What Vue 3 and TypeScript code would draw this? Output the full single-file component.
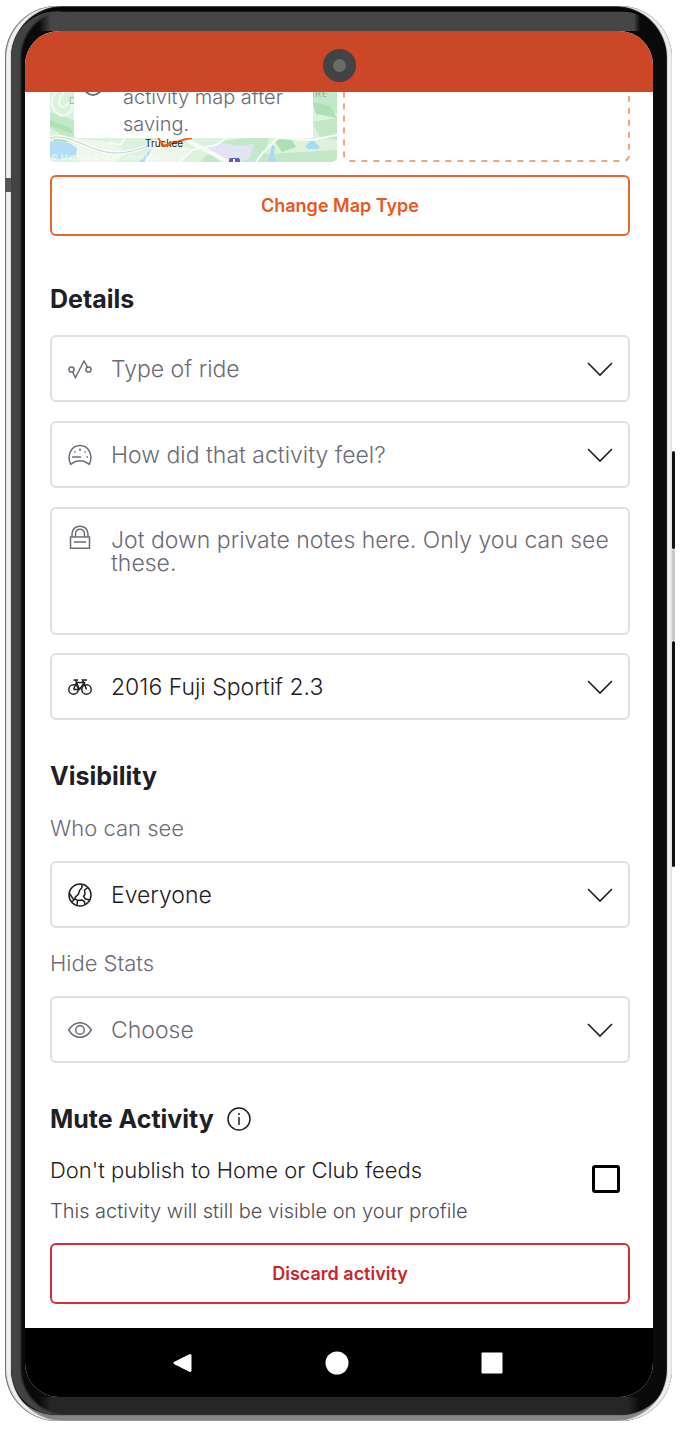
<script setup lang="ts">
import { ref } from 'vue'

const rideType = ref('')
const feel = ref('')
const notes = ref('')
const gear = ref('fuji')
const audience = ref('everyone')
const hiddenStats = ref('')
const muted = ref(false)
</script>

<template>
  <div class="stage">
    <div class="device">
      <span class="side-key left"></span>
      <span class="side-key power"></span>
      <span class="side-key volume"></span>
      <span class="side-key mid"></span>
      <div class="bezel">
        <div class="screen">
          <header class="status-bar">
            <span class="camera"></span>
          </header>

          <main class="content">
            <section class="media">
              <div class="map">
                <svg class="map-art" viewBox="0 0 287 70" preserveAspectRatio="xMidYMax slice" aria-hidden="true">
                  <rect width="287" height="70" fill="#dcf2dd" />
                  <path d="M0 20L24 28V50L0 36ZM170 50L220 42L215 62L287 58V70H150ZM245 0H287V22L262 12ZM262 30L287 26V48L270 45Z" fill="#c3e8c7" />
                  <path d="M20 46L60 50L75 60L66 70H30L24 58ZM100 52L122 48L140 57L130 70H98Z" fill="#edf7ea" />
                  <path d="M262 10L280 14L287 26L266 22ZM0 28L20 36L24 42L0 34ZM224 48L240 45L246 55L232 60ZM2 46L12 44L18 50L4 49Z" fill="#afdfb5" />
                  <path d="M156 54C170 48 178 53 190 54L204 52L200 66L190 70H170Z" fill="#e2e3f3" />
                  <path d="M0 50C10 48 20 51 27 56L26 64L8 67L0 65Z" fill="#b4dcf5" />
                  <path d="M255 55L262 47L270 55L268 57H258ZM222 53L225 55L224 62L226 70H218L220 62ZM89 70L98 60L102 57L94 70Z" fill="#acd8f5" />
                  <path d="M6 0C-1 8 2 20 10 23C16 25 24 20 22 12M14 0C7 8 8 16 14 15L20 10" fill="none" stroke="#f3faf2" stroke-width="2" />
                  <path d="M0 46C16 42 30 52 48 58C66 64 84 60 100 53C115 47 126 44 136 48L156 58L178 70" fill="none" stroke="#f8fbf8" stroke-width="4" />
                  <path d="M0 46C16 42 30 52 48 58C66 64 84 60 100 53" fill="none" stroke="#c9cfd8" stroke-width="1" />
                  <path d="M60 50L70 53L75 46M96 70C101 60 106 56 118 52M130 70L142 58L166 53L178 45M206 70C214 58 220 54 228 46L262 48L287 43" fill="none" stroke="#f8fbf8" stroke-width="2" />
                  <path d="M108 46L114 54L136 47L142 46" fill="none" stroke="#fc5a1f" stroke-width="2" />
                  <rect x="179" y="66" width="11" height="8" rx="2" fill="#5f5db8" />
                  <path d="M184 67V70" stroke="#fff" stroke-width="2" />
                  <text class="map-region" x="19" y="12">D</text>
                  <text class="map-region" x="262" y="5">IRE</text>
                  <text class="map-credit" x="1" y="68">© Mapbox © OpenStreetMap</text>
                  <text class="map-town" x="95" y="55">Truckee</text>
                  <path d="M110 49L114 54L122 51" fill="none" stroke="#fc5a1f" stroke-width="2" />
                </svg>
                <p class="map-note">
                  <svg class="note-icon" viewBox="0 0 20 20" aria-hidden="true"><circle cx="10" cy="10" r="9" /></svg>
                  <span>activity map after saving.</span>
                </p>
              </div>
              <svg class="drop-zone" aria-hidden="true">
                <rect x="1" y="-20" width="100%" height="100%" rx="6" />
              </svg>
            </section>

            <button type="button" class="action change-map">Change Map Type</button>

            <h2>Details</h2>
            <div class="fields">
              <label class="field muted">
                <svg class="icon" viewBox="0 0 24 24" aria-hidden="true">
                  <circle cx="3.5" cy="12.5" r="2.6" /><circle cx="20.5" cy="12.5" r="2.6" />
                  <path d="M4.6 15L7.4 20.5L16 4L19.5 10.2" />
                </svg>
                <select v-model="rideType" aria-label="Type of ride">
                  <option value="">Type of ride</option>
                  <option value="workout">Workout</option>
                </select>
                <svg class="chevron" viewBox="0 0 26 16" aria-hidden="true"><path d="M1 2L13 14L25 2" /></svg>
              </label>
              <label class="field muted">
                <svg class="icon" viewBox="0 0 24 24" aria-hidden="true">
                  <path d="M2.6 21.2C-1.5 12 3.5 2.500 12 2.500S25.500 12 21.400 21.200L20.500 20.800C15.500 16.800 8.500 16.800 3.500 20.800ZM4 14H13" />
                  <path d="M12 5.500V8M6.500 8.500L7.500 9.500M17.500 8.500L16.500 9.500M18.500 14H20" />
                </svg>
                <select v-model="feel" aria-label="How did that activity feel?">
                  <option value="">How did that activity feel?</option>
                  <option value="easy">Easy</option>
                </select>
                <svg class="chevron" viewBox="0 0 26 16" aria-hidden="true"><path d="M1 2L13 14L25 2" /></svg>
              </label>
              <label class="field notes muted">
                <svg class="icon" viewBox="0 0 24 24" aria-hidden="true">
                  <path d="M2.500 12H21.500V23.200H2.500ZM4 12V9C4 -1.500 20 -1.500 20 9V12M7.500 12V9C7.500 2.500 16.500 2.500 16.500 9V12M6 17H18" />
                </svg>
                <textarea v-model="notes" aria-label="Private notes" placeholder="Jot down private notes here. Only you can see these."></textarea>
              </label>
              <label class="field">
                <svg class="icon bike" viewBox="0 0 24 24" aria-hidden="true">
                  <circle cx="5.500" cy="14.500" r="4.700" /><circle cx="18.500" cy="14.500" r="4.700" />
                  <path d="M5.500 14.500L8.500 7.500H16.500L11.500 14.500H5.500M11.500 14.500L7.500 5M5.500 5H10M18.500 14.500L14.500 5H19" />
                </svg>
                <select v-model="gear" aria-label="Gear">
                  <option value="fuji">2016 Fuji Sportif 2.3</option>
                </select>
                <svg class="chevron" viewBox="0 0 26 16" aria-hidden="true"><path d="M1 2L13 14L25 2" /></svg>
              </label>
            </div>

            <h2>Visibility</h2>
            <label class="caption first" for="audience">Who can see</label>
            <div class="field">
              <svg class="icon globe" viewBox="0 0 24 24" aria-hidden="true">
                <circle cx="12" cy="12" r="11" />
                <path d="M13.800 1.200L14 4.500L11.500 7.500L10.500 11L7 14.500L7.500 16L5.500 16.500L1.200 10M20 4.500L16.500 7L17 11L15.500 13.500L17.500 16L22 17M3.500 19L7.500 16L9.500 17.500L9 22.500M9.500 17.500L14 17L16.500 18.500L17 21.800" />
              </svg>
              <select id="audience" v-model="audience">
                <option value="everyone">Everyone</option>
                <option value="followers">Followers</option>
              </select>
              <svg class="chevron" viewBox="0 0 26 16" aria-hidden="true"><path d="M1 2L13 14L25 2" /></svg>
            </div>
            <label class="caption" for="hidden-stats">Hide Stats</label>
            <div class="field muted">
              <svg class="icon" viewBox="0 0 24 24" aria-hidden="true">
                <path d="M.700 12C6.500 2.200 17.500 2.200 23.300 12C17.500 21.800 6.500 21.800 .700 12Z" />
                <circle cx="12" cy="12" r="4.300" />
              </svg>
              <select id="hidden-stats" v-model="hiddenStats">
                <option value="">Choose</option>
                <option value="pace">Pace</option>
              </select>
              <svg class="chevron" viewBox="0 0 26 16" aria-hidden="true"><path d="M1 2L13 14L25 2" /></svg>
            </div>

            <div class="heading-row">
              <h2>Mute Activity</h2>
              <button type="button" class="info" aria-label="About muting">
                <svg viewBox="0 0 24 24" aria-hidden="true">
                  <circle cx="12" cy="12" r="11" />
                  <path d="M12 10V18M12 6V8" />
                </svg>
              </button>
            </div>
            <div class="mute">
              <label for="mute">
                <span class="mute-title">Don't publish to Home or Club feeds</span>
                <span class="mute-sub">This activity will still be visible on your profile</span>
              </label>
              <input id="mute" v-model="muted" type="checkbox" />
            </div>

            <button type="button" class="action discard">Discard activity</button>
          </main>

          <nav class="system-nav" aria-label="System">
            <button type="button" aria-label="Back">
              <svg viewBox="0 0 24 24" aria-hidden="true"><path d="M5 12L20 4.500V19.500Z" stroke="#fff" stroke-width="3" stroke-linejoin="round" /></svg>
            </button>
            <button type="button" aria-label="Home">
              <svg viewBox="0 0 24 24" aria-hidden="true"><circle cx="12" cy="12" r="11.500" /></svg>
            </button>
            <button type="button" aria-label="Recents">
              <svg viewBox="0 0 24 24" aria-hidden="true"><rect x="1.500" y="1.500" width="21" height="21" rx="1" /></svg>
            </button>
          </nav>
        </div>
      </div>
    </div>
  </div>
</template>

<style>
body {
  margin: 0;
  background: #fff;
}
</style>

<style scoped>
.stage {
  padding: 6px 8px 8px 5px;
  font-family: Inter, "Liberation Sans", sans-serif;
  font-weight: 300;
  color: #1f2024;
}

.device {
  position: relative;
  padding: 5px 6px 6px;
  border-radius: 52px;
  background: #060606;
  box-shadow:
    inset 1px 0 1px #666,
    inset 6px 0 1px #f0f0f0,
    inset -1px 0 1px #ddd,
    inset -5px 0 1px #f0eeee,
    inset 0 -6px 1px #858585;
}

.bezel {
  padding: 20px 13px 18px 14px;
  border-radius: 46px;
  background:
    linear-gradient(to right, transparent, #464646 12px, #464646 calc(100% - 6px), transparent) 28px 1px / calc(100% - 54px) 19px no-repeat,
    linear-gradient(to right, transparent, #252625 12px, #252625 calc(100% - 12px), transparent) 28px 100% / calc(100% - 54px) 18px no-repeat,
    #090a09;
  box-shadow: inset 10px 0 2px #424342;
}

.screen {
  overflow: hidden;
  border-radius: 34px;
  background: #fff;
}

.side-key {
  position: absolute;
  right: -3px;
  width: 3px;
  border-radius: 2px;
  background: #111;
}

.side-key.power {
  top: 445px;
  height: 98px;
}

.side-key.mid {
  top: 543px;
  height: 92px;
  background: #c9c9c5;
}

.side-key.volume {
  top: 635px;
  height: 226px;
}

.side-key.left {
  top: 172px;
  left: 0;
  width: 6px;
  height: 14px;
  border-radius: 0;
  background: #555;
}

.status-bar {
  display: flex;
  align-items: center;
  justify-content: center;
  height: 61px;
  padding-top: 7px;
  box-sizing: border-box;
  background: #cc4628;
}

.camera {
  width: 13px;
  height: 13px;
  border: 10px solid #424342;
  border-radius: 50%;
  background: #696a69;
}

.content {
  display: flex;
  flex-direction: column;
  padding: 0 23px 24px 25px;
}

.media {
  display: grid;
  grid-template-columns: 1fr 1fr;
  gap: 6px;
  height: 70px;
}

.map {
  position: relative;
  overflow: hidden;
  border-radius: 0 0 5px 5px;
}

.map-art {
  display: block;
  width: 100%;
  height: 100%;
}

.map-region {
  font-size: 9px;
  letter-spacing: 1px;
  fill: #8b9a92;
}

.map-credit {
  font-size: 8px;
  fill: #fff;
  opacity: .8;
}

.map-town {
  font-size: 10px;
  font-weight: 400;
  fill: #222;
}

.map-note {
  position: absolute;
  right: 24px;
  bottom: 24px;
  left: 24px;
  display: flex;
  gap: 20px;
  margin: 0;
  padding: 0 20px 0 9px;
  border-radius: 0 0 3px 3px;
  background: #fff;
  font-size: 20px;
  line-height: 27px;
  color: #6d6b78;
}

.note-icon {
  flex: none;
  width: 20px;
  height: 20px;
  margin-top: -8px;
  fill: none;
  stroke: #6d6b78;
  stroke-width: 2;
}

.drop-zone {
  width: 100%;
  height: 70px;
  overflow: hidden;
}

.drop-zone rect {
  width: calc(100% - 2px);
  height: 89px;
  fill: none;
  stroke: #f2a57f;
  stroke-width: 2;
  stroke-dasharray: 6 6;
}

.action {
  height: 61px;
  border: 2px solid;
  border-radius: 6px;
  background: #fff;
  font-family: inherit;
  font-size: 18px;
  font-weight: 600;
}

.change-map {
  margin-top: 13px;
  border-color: #e9652f;
  color: #e8571f;
}

.discard {
  margin-top: 20px;
  border-color: #d03035;
  color: #c9252b;
}

h2 {
  margin: 41px 0 0;
  font-size: 25px;
  font-weight: 700;
  line-height: 30px;
}

.change-map + h2 {
  margin-top: 48px;
}

.fields {
  display: grid;
  gap: 19px;
  margin-top: 21px;
}

.field {
  display: grid;
  grid-template-columns: 24px 1fr 26px;
  align-items: center;
  column-gap: 19px;
  height: 67px;
  box-sizing: border-box;
  padding: 0 15px 0 16px;
  border: 2px solid #e0dfe8;
  border-radius: 6px;
  font-size: 23px;
}

.field.muted {
  color: #6d6b78;
}

.field.notes {
  grid-template-columns: 24px 1fr;
  align-items: start;
  height: 128px;
  margin-bottom: -1px;
  padding: 16px 0 16px 16px;
}

.icon {
  width: 24px;
  height: 24px;
  fill: none;
  stroke: currentColor;
  stroke-width: 1.5;
}

.chevron {
  width: 26px;
  height: 16px;
  fill: none;
  stroke: #1f2024;
  stroke-width: 1.6;
  pointer-events: none;
}

select,
textarea {
  width: 100%;
  min-width: 0;
  margin: 0;
  padding: 0;
  border: 0;
  outline: 0;
  background: transparent;
  color: inherit;
  font: inherit;
}

select {
  height: 40px;
  appearance: none;
}

textarea {
  height: 92px;
  padding-top: 4px;
  box-sizing: border-box;
  line-height: 23px;
  resize: none;
}

textarea::placeholder {
  color: inherit;
  opacity: 1;
}

.caption {
  margin: 21px 0 19px;
  font-size: 22px;
  line-height: 28px;
  color: #6d6b78;
}

.caption.first {
  margin-top: 23px;
}

.heading-row {
  display: flex;
  align-items: center;
  gap: 13px;
  margin-top: 41px;
}

.heading-row h2 {
  margin: 0;
}

.info {
  display: grid;
  width: 24px;
  height: 24px;
  padding: 0;
  border: 0;
  background: none;
}

.info svg {
  width: 24px;
  height: 24px;
  fill: none;
  stroke: #1f2024;
  stroke-width: 1.5;
}

.mute {
  display: flex;
  align-items: center;
  justify-content: space-between;
  margin-top: 22px;
  padding-right: 10px;
}

.mute-title,
.mute-sub {
  display: block;
}

.mute-title {
  font-size: 22px;
  line-height: 28px;
}

.mute-sub {
  margin-top: 15px;
  font-size: 20px;
  line-height: 24px;
  color: #505057;
}

.mute input {
  flex: none;
  width: 28px;
  height: 28px;
  margin: 0 0 22px;
  border: 3px solid #000;
  border-radius: 3px;
  appearance: none;
}

.mute input:checked {
  background: #000;
}

.system-nav {
  display: flex;
  align-items: center;
  justify-content: center;
  gap: 131px;
  height: 69px;
  padding-right: 4px;
  background: #000;
}

.system-nav button {
  display: grid;
  width: 24px;
  height: 24px;
  padding: 0;
  border: 0;
  background: none;
}

.system-nav svg {
  width: 24px;
  height: 24px;
  fill: #fff;
}
</style>
